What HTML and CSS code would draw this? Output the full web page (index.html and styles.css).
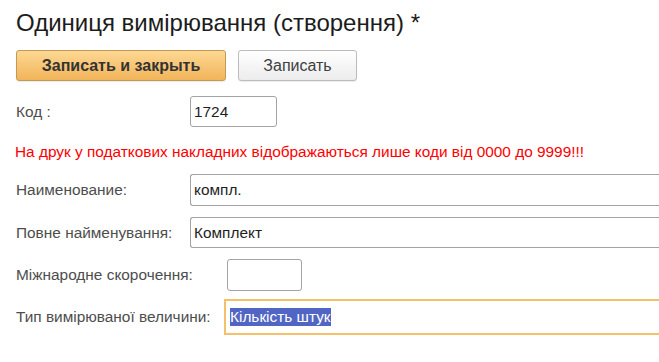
FILE: index.html
```html
<!DOCTYPE html>
<html lang="uk">

<head>
	<meta charset="UTF-8">
	<meta name="viewport" content="width=device-width, initial-scale=1.0">
	<title>Одиниця вимірювання (створення)</title>
	<link rel="stylesheet" href="styles.css">
</head>

<body>
	<div class="form">
		<h1 class="form-title">Одиниця вимірювання (створення) *</h1>

		<div class="toolbar">
			<button class="btn btn-default" type="button">Записать и закрыть</button>
			<button class="btn" type="button">Записать</button>
		</div>

		<div class="field-row row-code">
			<label class="field-label">Код :</label>
			<div class="field-input input-code">1724</div>
		</div>

		<p class="note">На друк у податкових накладних відображаються лише коди від 0000 до 9999!!!</p>

		<div class="field-row row-name">
			<label class="field-label">Наименование:</label>
			<div class="field-input input-wide">компл.</div>
		</div>

		<div class="field-row row-full">
			<label class="field-label">Повне найменування:</label>
			<div class="field-input input-wide">Комплект</div>
		</div>

		<div class="field-row row-intl">
			<label class="field-label label-intl">Міжнародне скорочення:</label>
			<div class="field-input input-short"></div>
		</div>

		<div class="field-row row-type">
			<label class="field-label label-type">Тип вимірюваної величини:</label>
			<div class="field-input input-wide input-focused"><span class="selected">Кількість штук</span></div>
		</div>
	</div>
</body>

</html>
```

FILE: styles.css
```css
html, body {
	margin: 0;
	padding: 0;
	background: #fff;
	overflow: hidden;
}

body {
	font-family: "Liberation Sans", Arial, sans-serif;
	font-size: 15.4px;
	color: #4d4d4d;
}

.form {
	padding: 0 0 0 16px;
}

.form-title {
	margin: 9px 0 13px;
	font-size: 24px;
	line-height: 28px;
	font-weight: normal;
	color: #1c1c1c;
}

.toolbar {
	display: flex;
	gap: 12px;
	margin-bottom: 15px;
}

.btn {
	height: 31px;
	width: 119px;
	padding: 0;
	border: 1px solid #bcbcbc;
	border-radius: 3px;
	background: linear-gradient(#ffffff, #ececec);
	font-family: inherit;
	font-size: 16px;
	color: #404040;
	box-shadow: 0 1px 1px rgba(0, 0, 0, 0.08);
}

.btn-default {
	width: 210px;
	border-color: #c39a53;
	background: linear-gradient(#fdd893, #f2b45a);
	font-weight: bold;
	color: #333;
}

.field-row {
	display: flex;
	align-items: center;
}

.field-label {
	width: 174px;
	flex: none;
	white-space: nowrap;
}

.field-input {
	box-sizing: border-box;
	border: 1px solid #a3a3a3;
	border-radius: 3px;
	background: #fff;
	padding: 0 3px;
	color: #1e1e1e;
	display: flex;
	align-items: center;
}

.row-code .field-input {
	height: 31px;
}

.input-code {
	width: 87px;
}

.note {
	margin: 15px 0 12px -1px;
	line-height: 20px;
	color: #ff0000;
}

.input-wide {
	flex: 1;
	border-right: none;
	border-radius: 3px 0 0 3px;
}

.row-name .field-input {
	height: 32px;
}

.row-full {
	margin-top: 11px;
}

.row-full .field-input {
	height: 31px;
}

.row-intl {
	margin-top: 11px;
}

.label-intl {
	width: 211px;
}

.input-short {
	width: 75px;
	height: 32px;
}

.row-type {
	margin-top: 8px;
}

.label-type {
	width: 208px;
}

.input-focused {
	height: 36px;
	border: 2px solid #f5c06c;
	border-right: none;
	border-radius: 0;
	padding: 0 4px;
}

.selected {
	background: #5166c4;
	color: #fff;
	line-height: 18px;
}
```
